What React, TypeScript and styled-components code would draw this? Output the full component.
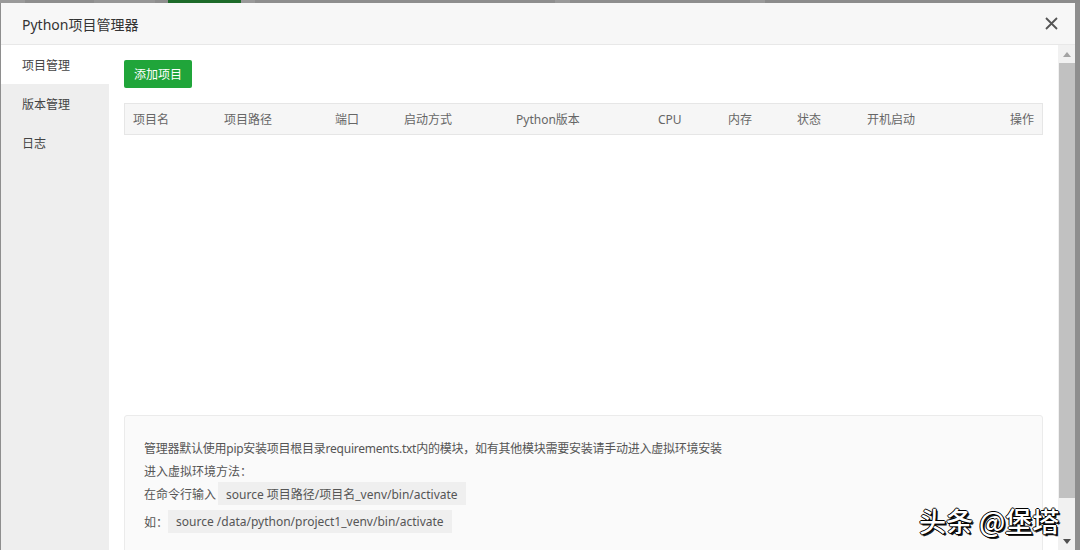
import React from "react";
import styled, { createGlobalStyle } from "styled-components";

const Global = createGlobalStyle`
  html, body { margin: 0; padding: 0; }
  body {
    width: 1080px;
    height: 550px;
    overflow: hidden;
    background: #8c8c8c;
    font-family: "Noto Sans", "Noto Sans CJK SC", sans-serif;
  }
`;

const Page = styled.div`
  position: relative;
  width: 1080px;
  height: 550px;
  display: flex;
  flex-direction: column;
  overflow: hidden;
  background: #8e8e8e;
`;

const TopStrip = styled.div`
  height: 3px;
  display: flex;
  flex-shrink: 0;
`;

const StripSeg = styled.div<{ $w: number; $c: string }>`
  width: ${(p) => p.$w}px;
  background: ${(p) => p.$c};
  flex-shrink: 0;
`;

const Modal = styled.div`
  margin-left: 1px;
  width: 1074px;
  flex: 1;
  display: flex;
  flex-direction: column;
  background: #fff;
  min-height: 0;
`;

const Header = styled.div`
  height: 41px;
  flex-shrink: 0;
  display: flex;
  align-items: center;
  justify-content: space-between;
  padding: 0 17px 0 21px;
  background: #f7f7f7;
  border-bottom: 1px solid #e8e8e8;
`;

const Title = styled.div`
  font-size: 14px;
  color: #333;
`;

const Close = styled.div`
  width: 14px;
  height: 14px;
  display: flex;
  align-items: center;
  justify-content: center;
`;

const Body = styled.div`
  flex: 1;
  display: flex;
  min-height: 0;
`;

const Sidebar = styled.div`
  width: 108px;
  flex-shrink: 0;
  background: #eeeeee;
  display: flex;
  flex-direction: column;
`;

const NavItem = styled.div<{ $active?: boolean }>`
  height: 39px;
  display: flex;
  align-items: center;
  padding-left: 21px;
  font-size: 12px;
  color: #444;
  background: ${(p) => (p.$active ? "#fff" : "transparent")};
`;

const Content = styled.div`
  flex: 1;
  display: flex;
  flex-direction: column;
  padding: 15px 15px 0 15px;
  min-width: 0;
  overflow: hidden;
`;

const AddButton = styled.button`
  align-self: flex-start;
  flex-shrink: 0;
  height: 28px;
  padding: 0 10px;
  border: none;
  border-radius: 2px;
  background: #20a53a;
  color: #fff;
  font-family: inherit;
  font-size: 12px;
  cursor: pointer;
`;

const TableWrap = styled.div`
  margin-top: 15px;
  height: 312px;
  flex-shrink: 0;
`;

const TableHead = styled.div`
  height: 30px;
  display: grid;
  grid-template-columns: 91px 111px 69px 112px 142px 70px 69px 70px 1fr 1fr;
  align-items: center;
  background: #f6f6f6;
  border: 1px solid #e6e6e6;
`;

const Th = styled.div<{ $right?: boolean }>`
  padding: 0 8px;
  font-size: 12px;
  color: #666;
  white-space: nowrap;
  text-align: ${(p) => (p.$right ? "right" : "left")};
`;

const InfoBox = styled.div`
  flex-shrink: 0;
  background: #fafafa;
  border: 1px solid #ebebeb;
  border-radius: 3px;
  padding: 20px 19px 22px;
  display: flex;
  flex-direction: column;
`;

const InfoLine = styled.div<{ $gap?: number; $tight?: boolean }>`
  height: 23px;
  display: flex;
  align-items: center;
  font-size: 12px;
  color: #555;
  white-space: nowrap;
  letter-spacing: ${(p) => (p.$tight ? "-0.25px" : "0")};
  margin-bottom: ${(p) => p.$gap ?? 0}px;
`;

const Code = styled.span<{ $ml?: number }>`
  display: inline-flex;
  align-items: center;
  height: 23px;
  padding: 0 8px;
  margin-left: ${(p) => p.$ml ?? 0}px;
  background: #efefef;
  color: #555;
  font-size: 12px;
`;

const ScrollBar = styled.div`
  width: 17px;
  flex-shrink: 0;
  display: flex;
  flex-direction: column;
  background: #f1f1f1;
`;

const ScrollArrow = styled.div`
  height: 18px;
  display: flex;
  align-items: center;
  justify-content: center;
  flex-shrink: 0;
`;

const Thumb = styled.div`
  margin: 0 0 0 1px;
  height: 435px;
  flex-shrink: 0;
  background: #c1c1c1;
`;

const Track = styled.div`
  flex: 1;
`;

const Watermark = styled.div`
  position: absolute;
  left: 919px;
  top: 501px;
  font-family: "Noto Sans CJK SC", sans-serif;
  font-size: 27px;
  font-weight: 500;
  color: #fff;
  white-space: nowrap;
  text-shadow: 1px 1px 0 #000, -1px 0 0 #000, 0 -1px 0 #000, 1px 0 0 #000,
    0 1px 0 #000, 2px 2px 0 #222;
`;

const columns = [
  "项目名",
  "项目路径",
  "端口",
  "启动方式",
  "Python版本",
  "CPU",
  "内存",
  "状态",
  "开机启动",
];

export default function App() {
  return (
    <>
      <Global />
      <Page>
        <TopStrip>
          <StripSeg $w={25} $c="#9a9a9a" />
          <StripSeg $w={69} $c="#8e8e8e" />
          <StripSeg $w={61} $c="#969696" />
          <StripSeg $w={13} $c="#8e8e8e" />
          <StripSeg $w={73} $c="#1e6b2a" />
          <StripSeg $w={14} $c="#999999" />
          <StripSeg $w={300} $c="#8e8e8e" />
          <StripSeg $w={15} $c="#9a9a9a" />
          <StripSeg $w={180} $c="#8e8e8e" />
          <StripSeg $w={15} $c="#9a9a9a" />
          <StripSeg $w={315} $c="#8c8c8c" />
        </TopStrip>
        <Modal>
          <Header>
            <Title>Python项目管理器</Title>
            <Close>
              <svg width="13" height="13" viewBox="0 0 13 13">
                <path
                  d="M1 1 L12 12 M12 1 L1 12"
                  stroke="#555"
                  strokeWidth="1.8"
                  fill="none"
                />
              </svg>
            </Close>
          </Header>
          <Body>
            <Sidebar>
              <NavItem $active>项目管理</NavItem>
              <NavItem>版本管理</NavItem>
              <NavItem>日志</NavItem>
            </Sidebar>
            <Content>
              <AddButton>添加项目</AddButton>
              <TableWrap>
                <TableHead>
                  {columns.map((c) => (
                    <Th key={c}>{c}</Th>
                  ))}
                  <Th $right>操作</Th>
                </TableHead>
              </TableWrap>
              <InfoBox>
                <InfoLine $tight>
                  管理器默认使用pip安装项目根目录requirements.txt内的模块，如有其他模块需要安装请手动进入虚拟环境安装
                </InfoLine>
                <InfoLine>进入虚拟环境方法：</InfoLine>
                <InfoLine $gap={5}>
                  在命令行输入<Code $ml={2}>source 项目路径/项目名_venv/bin/activate</Code>
                </InfoLine>
                <InfoLine>
                  如：<Code>source /data/python/project1_venv/bin/activate</Code>
                </InfoLine>
              </InfoBox>
            </Content>
            <ScrollBar>
              <ScrollArrow>
                <svg width="8" height="5" viewBox="0 0 8 5">
                  <path d="M0 5 L4 0 L8 5 Z" fill="#a3a3a3" />
                </svg>
              </ScrollArrow>
              <Thumb />
              <Track />
              <ScrollArrow>
                <svg width="8" height="5" viewBox="0 0 8 5">
                  <path d="M0 0 L4 5 L8 0 Z" fill="#505050" />
                </svg>
              </ScrollArrow>
            </ScrollBar>
          </Body>
        </Modal>
        <Watermark>头条 @堡塔</Watermark>
      </Page>
    </>
  );
}
